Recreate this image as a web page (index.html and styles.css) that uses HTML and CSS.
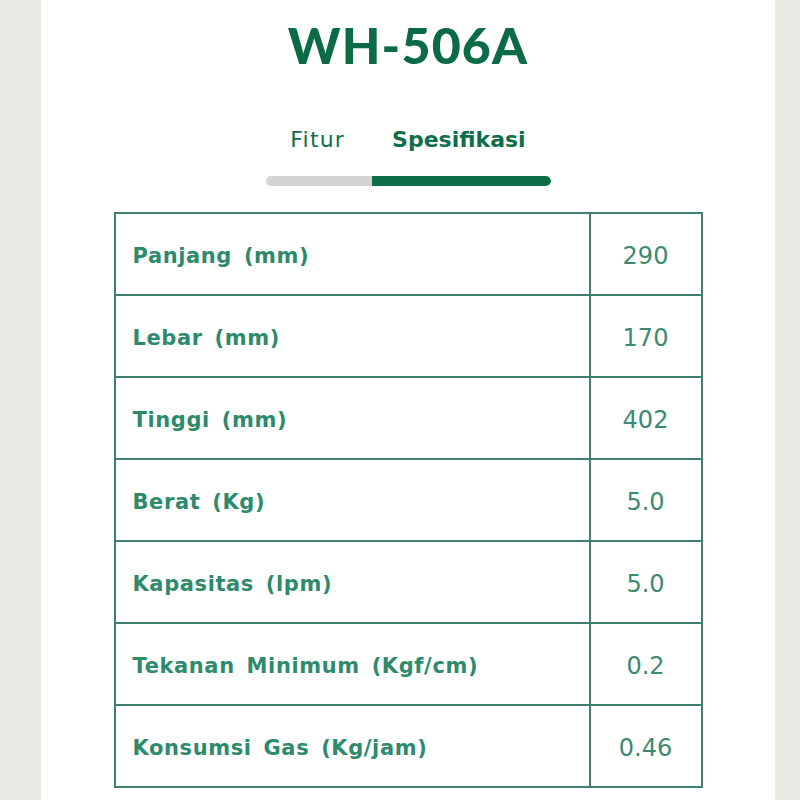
FILE: index.html
```html
<!DOCTYPE html>
<html>
<head>
<meta charset="utf-8">
<link rel="stylesheet" href="styles.css">
</head>
<body>
<div class="panel">
  <h1 class="title">WH-506A</h1>
  <div class="tabs">
    <span class="tab">Fitur</span>
    <span class="tab active">Spesifikasi</span>
  </div>
  <div class="bar"><div class="bar-fill"></div></div>
  <table class="spec">
    <tr><td class="label">Panjang (mm)</td><td class="value">290</td></tr>
    <tr><td class="label">Lebar (mm)</td><td class="value">170</td></tr>
    <tr><td class="label">Tinggi (mm)</td><td class="value">402</td></tr>
    <tr><td class="label">Berat (Kg)</td><td class="value">5.0</td></tr>
    <tr><td class="label">Kapasitas (lpm)</td><td class="value">5.0</td></tr>
    <tr><td class="label">Tekanan Minimum (Kgf/cm)</td><td class="value">0.2</td></tr>
    <tr><td class="label">Konsumsi Gas (Kg/jam)</td><td class="value">0.46</td></tr>
  </table>
</div>
</body>
</html>
```
FILE: styles.css
```css
html, body {
  margin: 0;
  padding: 0;
  background: #e9e8e3;
}
body {
  font-family: "DejaVu Sans", sans-serif;
}
.panel {
  width: 734px;
  margin-left: 41px;
  background: #fff;
  height: 800px;
  overflow: hidden;
  display: flex;
  flex-direction: column;
  align-items: center;
}
.title {
  margin: 15px 0 0;
  font-family: "Lato", sans-serif;
  font-size: 50px;
  line-height: 60px;
  font-weight: 900;
  color: #0b6b45;
  letter-spacing: 1.2px;
}
.tabs {
  margin-top: 50px;
  display: flex;
  gap: 47px;
  font-size: 22px;
  line-height: 30px;
  color: #0d6e47;
}
.tab {
  letter-spacing: 1.2px;
}
.tab.active {
  font-weight: 700;
  letter-spacing: 0;
}
.bar {
  margin-top: 21px;
  width: 285px;
  height: 10px;
  border-radius: 5px;
  background: #d4d4d4;
  display: flex;
  justify-content: flex-end;
  overflow: hidden;
}
.bar-fill {
  width: 179px;
  height: 100%;
  background: #0d6e47;
  border-radius: 0 5px 5px 0;
}
.spec {
  margin-top: 26px;
  width: 589px;
  border-collapse: collapse;
  border: 2px solid #3f7f72;
}
.spec td {
  border: 2px solid #3f7f72;
  height: 77px;
  padding: 3px 0 0;
}
.label {
  padding-left: 17px !important;
  font-size: 21px;
  font-weight: 700;
  color: #2e8a6c;
  word-spacing: 4px;
  letter-spacing: 0.6px;
}
.value {
  width: 110px;
  text-align: center;
  font-size: 24px;
  color: #3b8b72;
}
```
